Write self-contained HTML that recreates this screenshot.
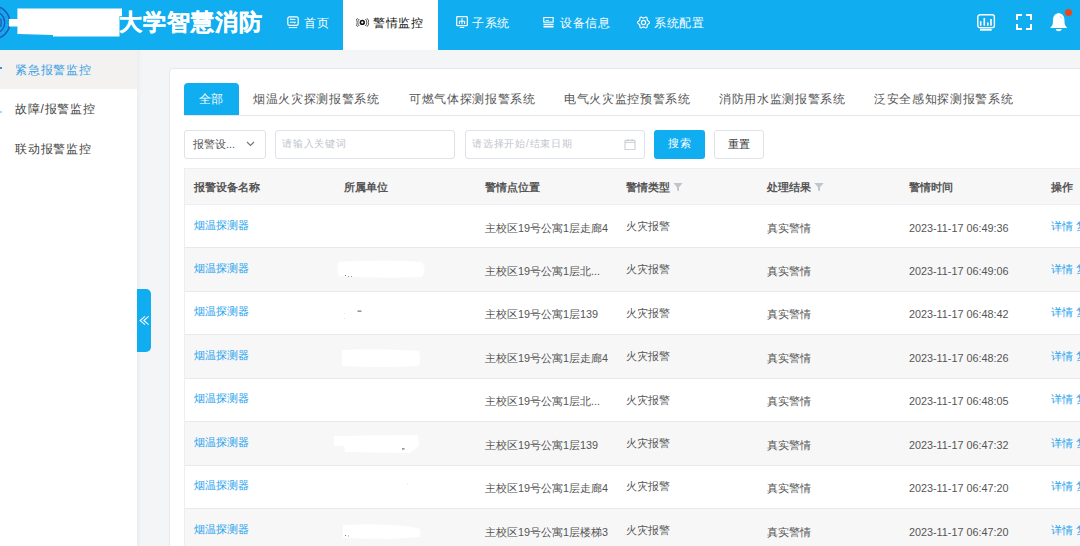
<!DOCTYPE html>
<html><head><meta charset="utf-8">
<style>
*{margin:0;padding:0;box-sizing:border-box}
html,body{width:1080px;height:546px;overflow:hidden;background:#f4f5f7;font-family:"Liberation Sans",sans-serif;color:#333}
.abs{position:absolute}
#hdr{position:absolute;left:0;top:0;width:1080px;height:50px;background:#10adf1}
.nav{position:absolute;top:0;height:50px;line-height:46px;font-size:12px;letter-spacing:0.6px;color:#fff;white-space:nowrap}
.nav svg{position:absolute;top:16px}
.nav span{position:absolute;top:0}
#side{position:absolute;left:0;top:50px;width:137px;height:496px;background:#fff}
.si{position:absolute;left:0;width:137px;height:40px;line-height:40px;font-size:12px;letter-spacing:0.75px;color:#444;padding-left:15px}
#card{position:absolute;left:169px;top:67.5px;width:930px;height:500px;background:#fff;border:1px solid #e6e8eb;border-radius:4px}
.tab{position:absolute;top:83px;height:32px;line-height:32px;font-size:12px;letter-spacing:0.67px;color:#555;white-space:nowrap}
.inp{position:absolute;top:130px;height:28.7px;border:1px solid #dfe2e8;border-radius:3px;background:#fff;font-size:10px;letter-spacing:0.8px;line-height:26.7px;color:#c0c4cc;padding-left:6px;white-space:nowrap}
.btn{position:absolute;top:130px;height:29px;border-radius:3px;font-size:11px;letter-spacing:0.5px;line-height:27.5px;text-align:center}
.row{position:absolute;left:185px;width:900px}
.hl{position:absolute;left:185px;width:900px;height:1px;background:#e9e9ea}
.c{position:absolute;font-size:10.8px;white-space:nowrap;color:#555}
.th{position:absolute;font-size:10.8px;font-weight:bold;color:#555;white-space:nowrap;top:180.5px}
.lnk{color:#1fa3ee}
.blob{position:absolute;background:#fff;border-radius:6px}
</style></head><body>
<div id="hdr">
  <!-- emblem -->
  <svg class="abs" style="left:0;top:0" width="130" height="50" viewBox="0 0 130 50">
    <circle cx="-6.6" cy="22.5" r="16.4" fill="none" stroke="#1f5ab6" stroke-width="1.5"/>
    <circle cx="-6.6" cy="22.5" r="13.8" fill="none" stroke="#2a6ac4" stroke-width="0.8" stroke-dasharray="1.2 3"/>
    <circle cx="-6.6" cy="22.5" r="11.3" fill="none" stroke="#1f5ab6" stroke-width="1.4"/>
    <circle cx="-6.6" cy="22.5" r="8" fill="none" stroke="#2a66c0" stroke-width="1"/>
    <path d="M1 19v8" stroke="#1f5ab6" stroke-width="1"/>
    <polygon points="17.4,8.5 122,8.5 122,16 119.5,16 119.5,36.5 53,36.5 53,35 17.4,34 17.4,26.5 9,26.5 9,19 17.4,19" fill="#fff"/>
  </svg>
  <div class="abs" style="left:118.5px;top:6px;font-size:23px;letter-spacing:1px;font-weight:bold;-webkit-text-stroke:0.3px #fff;color:#fff;line-height:32px;white-space:nowrap">大学智慧消防</div>

  <div class="nav" style="left:287px">
    <svg style="left:0;top:16px" width="13" height="13" viewBox="0 0 13 13"><rect x="0.8" y="0.9" width="10.4" height="8.4" rx="1.6" fill="none" stroke="#fff" stroke-width="1.2"/><path d="M3.2 3.4h5.2M2.9 6.2h5.6M1.8 11.6h8.4" stroke="#fff" stroke-width="1"/><path d="M3 3.4l1.3-1M8.7 6.2l-1.3 1" stroke="#fff" stroke-width="0.9"/></svg>
    <span style="left:17px">首页</span>
  </div>
  <div class="abs" style="left:342.5px;top:0;width:95px;height:50px;background:#fff"></div>
  <div class="nav" style="left:356px;color:#111;font-weight:500">
    <svg style="left:0;top:17.5px" width="13" height="9" viewBox="0 0 13 9"><circle cx="6.3" cy="4.4" r="1.9" fill="none" stroke="#111" stroke-width="1.6"/><path d="M3.2 1a5 5 0 0 0 0 7M9.4 1a5 5 0 0 1 0 7M1.5 0.3a6.5 6.5 0 0 0 0 8.4M11.1 0.3a6.5 6.5 0 0 1 0 8.4" fill="none" stroke="#333" stroke-width="0.9"/></svg>
    <span style="left:17px">警情监控</span>
  </div>
  <div class="nav" style="left:456px">
    <svg style="left:0;top:16px" width="13" height="13" viewBox="0 0 13 13"><rect x="0.7" y="0.7" width="10.6" height="9" rx="0.8" fill="none" stroke="#fff" stroke-width="1.2"/><path d="M6 2.2v6M3.4 8V5.2h5.2V8" fill="none" stroke="#fff" stroke-width="1"/><path d="M3.8 11.5h4.4" stroke="#fff" stroke-width="1"/></svg>
    <span style="left:16px">子系统</span>
  </div>
  <div class="nav" style="left:543px">
    <svg style="left:0;top:16px" width="12" height="13" viewBox="0 0 12 13"><rect x="0.75" y="1.55" width="9.4" height="4.6" fill="none" stroke="#fff" stroke-width="1.1"/><path d="M2.7 4.5h3.2" stroke="#fff" stroke-width="0.9"/><path d="M0.5 8.4h10M0.5 10.8h10" stroke="#fff" stroke-width="1.5"/></svg>
    <span style="left:17px">设备信息</span>
  </div>
  <div class="nav" style="left:637px">
    <svg style="left:0;top:15.8px" width="13" height="13" viewBox="0 0 13 13"><path d="M12.50 6.50 L12.37 7.01 L12.01 7.47 L11.52 7.85 L11.01 8.14 L10.58 8.40 L10.31 8.70 L10.19 9.09 L10.18 9.59 L10.18 10.18 L10.10 10.79 L9.88 11.33 L9.50 11.70 L8.99 11.84 L8.42 11.76 L7.85 11.52 L7.33 11.23 L6.89 10.99 L6.50 10.90 L6.11 10.99 L5.67 11.23 L5.15 11.52 L4.58 11.76 L4.01 11.84 L3.50 11.70 L3.12 11.33 L2.90 10.79 L2.82 10.18 L2.82 9.59 L2.81 9.09 L2.69 8.70 L2.42 8.40 L1.99 8.14 L1.48 7.85 L0.99 7.47 L0.63 7.01 L0.50 6.50 L0.63 5.99 L0.99 5.53 L1.48 5.15 L1.99 4.86 L2.42 4.60 L2.69 4.30 L2.81 3.91 L2.82 3.41 L2.82 2.82 L2.90 2.21 L3.12 1.67 L3.50 1.30 L4.01 1.16 L4.58 1.24 L5.15 1.48 L5.67 1.77 L6.11 2.01 L6.50 2.10 L6.89 2.01 L7.33 1.77 L7.85 1.48 L8.42 1.24 L8.99 1.16 L9.50 1.30 L9.88 1.67 L10.10 2.21 L10.18 2.82 L10.18 3.41 L10.19 3.91 L10.31 4.30 L10.58 4.60 L11.01 4.86 L11.52 5.15 L12.01 5.53 L12.37 5.99Z" fill="none" stroke="#fff" stroke-width="1.15" stroke-linejoin="round"/><circle cx="6.5" cy="6.5" r="2.1" fill="none" stroke="#fff" stroke-width="1.15"/></svg>
    <span style="left:17px">系统配置</span>
  </div>

  <!-- right icons -->
  <svg class="abs" style="left:977px;top:14px" width="19" height="18" viewBox="0 0 19 18"><rect x="0.8" y="0.8" width="16.6" height="12.8" rx="2.2" fill="none" stroke="#fff" stroke-width="1.4"/><path d="M3.7 11.8V7.3M7.3 11.8V4M10.8 11.8V8.6M14 11.8V5" stroke="#fff" stroke-width="1.6"/><path d="M3 15.7h11.7" stroke="#fff" stroke-width="2"/></svg>
  <svg class="abs" style="left:1016px;top:14px" width="16" height="16" viewBox="0 0 16 16"><path d="M1 6V1h5M10 1h5v5M15 10v5h-5M6 15H1v-5" fill="none" stroke="#fff" stroke-width="2"/></svg>
  <svg class="abs" style="left:1048px;top:10px" width="22" height="24" viewBox="0 0 22 24"><path d="M10.7 3C7.5 3.4 5.3 5.6 5 9L4.8 13.5C4.5 15.5 3.2 16.8 2.2 17.9L19.2 17.9C18.2 16.8 16.9 15.5 16.6 13.5L16.4 9C16.1 5.6 13.9 3.4 10.7 3Z" fill="#fff"/><path d="M7.8 19.1h5.8a2.9 2.1 0 0 1 -5.8 0z" fill="#fff"/><path d="M12.2 6.6q1.4 0.5 1.9 1.9" fill="none" stroke="#7fcdf5" stroke-width="0.8"/></svg>
  <div class="abs" style="left:1064.9px;top:9px;width:7px;height:7px;border-radius:50%;background:#ec4519"></div>
</div>

<div id="side">
  <div class="si" style="top:0;height:39px;line-height:40.5px;background:#f3f2f1;color:#3aa0e4">紧急报警监控</div>
  <div class="abs" style="left:0;top:17px;width:1.5px;height:2px;background:#3a8fe0"></div>
  <div class="abs" style="left:0;top:61px;width:1.5px;height:2px;background:#9fdcf5"></div>
  <div class="si" style="top:39.3px">故障/报警监控</div>
  <div class="si" style="top:79.3px">联动报警监控</div>
</div>
<div class="abs" style="left:137px;top:50px;width:5px;height:496px;background:linear-gradient(to right,rgba(0,0,0,0.035),rgba(0,0,0,0))"></div>
<div class="abs" style="left:137.4px;top:289px;width:13.5px;height:63px;background:#10adf1;border-radius:0 5px 5px 0"><svg class="abs" style="left:0;top:0" width="14" height="63" viewBox="0 0 14 63"><path d="M7.9 27.3L3.2 31.5 7.9 35.6M11.6 27.3L6.9 31.5 11.6 35.6" fill="none" stroke="#fff" stroke-width="1.1"/></svg></div>

<div id="card"></div>
<!-- tabs -->
<div class="abs" style="left:184px;top:115px;width:900px;height:1px;background:#e4e7ed"></div>
<div class="tab" style="left:184px;width:55px;background:#10adf1;color:#fff;text-align:center;border-radius:4px 4px 0 0">全部</div>
<div class="tab" style="left:253px">烟温火灾探测报警系统</div>
<div class="tab" style="left:409px">可燃气体探测报警系统</div>
<div class="tab" style="left:564px">电气火灾监控预警系统</div>
<div class="tab" style="left:719px">消防用水监测报警系统</div>
<div class="tab" style="left:874px">泛安全感知探测报警系统</div>

<!-- filters -->
<div class="inp" style="left:184px;width:82px;color:#555;font-size:10.8px;letter-spacing:0;padding-left:8px">报警设...<svg class="abs" style="left:61px;top:10px" width="9" height="6" viewBox="0 0 9 6"><path d="M1 1l3.5 3.5L8 1" fill="none" stroke="#777" stroke-width="1.2"/></svg></div>
<div class="inp" style="left:275px;width:180px">请输入关键词</div>
<div class="inp" style="left:465px;width:180px">请选择开始/结束日期<svg class="abs" style="left:158px;top:6.8px" width="12" height="12" viewBox="0 0 12 12"><path d="M1 2.3h10v9.4h-10zM1 4.3h10M3.9 1v2M8.1 1v2" fill="none" stroke="#bcc0c8" stroke-width="0.85"/></svg></div>
<div class="btn" style="left:654px;width:51px;background:#10adf1;color:#fff">搜索</div>
<div class="btn" style="left:714px;width:50px;border:1px solid #e0e2e7;background:#fff;color:#333">重置</div>

<!-- table -->
<div class="abs" style="left:184px;top:168px;width:900px;height:380px;border-left:1px solid #ebeef5;border-top:1px solid #ebeef5"></div>
<div class="abs" style="left:185px;top:169px;width:900px;height:36px;background:#f7f7f7;border-bottom:1px solid #ebeef5"></div>
<div class="th" style="left:194px">报警设备名称</div>
<div class="th" style="left:344px">所属单位</div>
<div class="th" style="left:485px">警情点位置</div>
<div class="th" style="left:626px">警情类型<svg style="position:relative;top:1px;margin-left:3px" width="10" height="10" viewBox="0 0 10 10"><path d="M0.3 1h9.4L6 5.2V9.3L4 8.3V5.2z" fill="#c0c4cc"/></svg></div>
<div class="th" style="left:767px">处理结果<svg style="position:relative;top:1px;margin-left:3px" width="10" height="10" viewBox="0 0 10 10"><path d="M0.3 1h9.4L6 5.2V9.3L4 8.3V5.2z" fill="#c0c4cc"/></svg></div>
<div class="th" style="left:909px">警情时间</div>
<div class="th" style="left:1051px">操作</div>

<div id="rows">
<div class="row" style="top:204.50px;height:43.43px;background:#fff"></div>
<div class="row" style="top:247.93px;height:43.43px;background:#f7f7f7"></div>
<div class="row" style="top:291.36px;height:43.43px;background:#fff"></div>
<div class="row" style="top:334.79px;height:43.43px;background:#f7f7f7"></div>
<div class="row" style="top:378.22px;height:43.43px;background:#fff"></div>
<div class="row" style="top:421.65px;height:43.43px;background:#f7f7f7"></div>
<div class="row" style="top:465.08px;height:43.43px;background:#fff"></div>
<div class="row" style="top:508.51px;height:43.43px;background:#f7f7f7"></div>
<div class="hl" style="top:247.43px"></div>
<div class="hl" style="top:290.86px"></div>
<div class="hl" style="top:334.29px"></div>
<div class="hl" style="top:377.72px"></div>
<div class="hl" style="top:421.15px"></div>
<div class="hl" style="top:464.58px"></div>
<div class="hl" style="top:508.01px"></div>
<div class="hl" style="top:551.44px"></div>
<div class="c lnk" style="left:194px;top:218.50px">烟温探测器</div>
<div class="c" style="left:485px;top:221.50px">主校区19号公寓1层走廊4</div>
<div class="c" style="left:626px;top:219.80px">火灾报警</div>
<div class="c" style="left:767px;top:221.50px">真实警情</div>
<div class="c" style="left:909px;top:221.50px">2023-11-17 06:49:36</div>
<div class="c lnk" style="left:1051px;top:219.50px">详情 复核</div>
<div class="c lnk" style="left:194px;top:261.93px">烟温探测器</div>
<div class="c" style="left:485px;top:264.93px">主校区19号公寓1层北...</div>
<div class="c" style="left:626px;top:263.23px">火灾报警</div>
<div class="c" style="left:767px;top:264.93px">真实警情</div>
<div class="c" style="left:909px;top:264.93px">2023-11-17 06:49:06</div>
<div class="c lnk" style="left:1051px;top:262.93px">详情 复核</div>
<div class="c lnk" style="left:194px;top:305.36px">烟温探测器</div>
<div class="c" style="left:485px;top:308.36px">主校区19号公寓1层139</div>
<div class="c" style="left:626px;top:306.66px">火灾报警</div>
<div class="c" style="left:767px;top:308.36px">真实警情</div>
<div class="c" style="left:909px;top:308.36px">2023-11-17 06:48:42</div>
<div class="c lnk" style="left:1051px;top:306.36px">详情 复核</div>
<div class="c lnk" style="left:194px;top:348.79px">烟温探测器</div>
<div class="c" style="left:485px;top:351.79px">主校区19号公寓1层走廊4</div>
<div class="c" style="left:626px;top:350.09px">火灾报警</div>
<div class="c" style="left:767px;top:351.79px">真实警情</div>
<div class="c" style="left:909px;top:351.79px">2023-11-17 06:48:26</div>
<div class="c lnk" style="left:1051px;top:349.79px">详情 复核</div>
<div class="c lnk" style="left:194px;top:392.22px">烟温探测器</div>
<div class="c" style="left:485px;top:395.22px">主校区19号公寓1层北...</div>
<div class="c" style="left:626px;top:393.52px">火灾报警</div>
<div class="c" style="left:767px;top:395.22px">真实警情</div>
<div class="c" style="left:909px;top:395.22px">2023-11-17 06:48:05</div>
<div class="c lnk" style="left:1051px;top:393.22px">详情 复核</div>
<div class="c lnk" style="left:194px;top:435.65px">烟温探测器</div>
<div class="c" style="left:485px;top:438.65px">主校区19号公寓1层139</div>
<div class="c" style="left:626px;top:436.95px">火灾报警</div>
<div class="c" style="left:767px;top:438.65px">真实警情</div>
<div class="c" style="left:909px;top:438.65px">2023-11-17 06:47:32</div>
<div class="c lnk" style="left:1051px;top:436.65px">详情 复核</div>
<div class="c lnk" style="left:194px;top:479.08px">烟温探测器</div>
<div class="c" style="left:485px;top:482.08px">主校区19号公寓1层走廊4</div>
<div class="c" style="left:626px;top:480.38px">火灾报警</div>
<div class="c" style="left:767px;top:482.08px">真实警情</div>
<div class="c" style="left:909px;top:482.08px">2023-11-17 06:47:20</div>
<div class="c lnk" style="left:1051px;top:480.08px">详情 复核</div>
<div class="c lnk" style="left:194px;top:522.51px">烟温探测器</div>
<div class="c" style="left:485px;top:525.51px">主校区19号公寓1层楼梯3</div>
<div class="c" style="left:626px;top:523.81px">火灾报警</div>
<div class="c" style="left:767px;top:525.51px">真实警情</div>
<div class="c" style="left:909px;top:525.51px">2023-11-17 06:47:20</div>
<div class="c lnk" style="left:1051px;top:523.51px">详情 复核</div>
</div>

<svg class="abs" style="left:0;top:0;pointer-events:none" width="1080" height="546" viewBox="0 0 1080 546">
  <path d="M339 262 Q380 259 422 262 Q427 270 422 277 Q380 279 339 276 Q336 269 339 262z" fill="#fff"/>
  <path d="M342 350 Q380 348 419 351 Q421 359 419 366 Q380 368 342 366z" fill="#fff"/>
  <path d="M334 436 L418 435 L419 446 L410 453 L345 452 L344 446 L334 446z" fill="#fff"/>
  <path d="M343 525 Q380 523 412 527 L420 529 L420 537 L390 539 L343 538z" fill="#fff"/>
  <rect x="357.5" y="310.6" width="4" height="1" fill="#556"/><rect x="344" y="313" width="1" height="1" fill="#f5ecc0"/><rect x="344" y="318" width="1" height="1" fill="#f7d9b8"/>
  <rect x="345" y="275" width="1" height="1" fill="#777"/><rect x="348" y="276" width="1" height="1" fill="#999"/><rect x="351" y="276" width="1" height="1" fill="#999"/>
  <rect x="402" y="448.3" width="2.5" height="1.2" fill="#667"/><rect x="407" y="483.5" width="1" height="1" fill="#cfe6f7"/>
  <rect x="345" y="535" width="1" height="1" fill="#777"/><rect x="348" y="535.5" width="1" height="1" fill="#999"/>
</svg>
</body></html>
